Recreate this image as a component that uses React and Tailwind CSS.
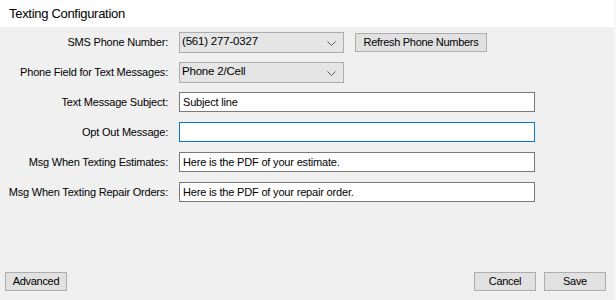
import React from "react";

function Chevron() {
  return (
    <svg width="9" height="5" viewBox="0 0 9 5" className="absolute right-[7px] top-[8px]">
      <path d="M0.5 0.5 L4.5 4.5 L8.5 0.5" fill="none" stroke="#555" strokeWidth="1" />
    </svg>
  );
}

function Combo({ value, width }) {
  return (
    <div className={`relative h-[21px] ${width} bg-[#e5e5e5] border border-[#adadad] pl-[2px] flex items-center text-[11.5px] tracking-[-0.2px]`}>
      <span>{value}</span>
      <Chevron />
    </div>
  );
}

function TextBox({ value, focused }) {
  return (
    <div
      className={`h-[20px] w-[356px] bg-white border ${focused ? "border-[#0078d7]" : "border-[#7a7a7a]"} pl-[3px] flex items-center whitespace-nowrap text-[11px] tracking-[-0.18px]`}
    >
      {value}
    </div>
  );
}

function Label({ children }) {
  return (
    <div className="w-[169px] pr-[1px] text-right whitespace-nowrap text-[11px] tracking-[-0.2px]">
      {children}
    </div>
  );
}

function Btn({ children, className }) {
  return (
    <button
      className={`h-[19px] bg-[#e1e1e1] border border-[#adadad] flex items-center justify-center whitespace-nowrap text-[11px] tracking-[-0.3px] ${className}`}
    >
      {children}
    </button>
  );
}

export default function App() {
  return (
    <div
      className="w-[616px] h-[300px] bg-[#f0f0f0] text-[12px] text-black flex flex-col border-r-2 border-[#f8f8f8]"
      style={{ fontFamily: '"Liberation Sans", Arial, sans-serif' }}
    >
      <div className="h-[27px] bg-white flex items-center pl-[9px] text-[13px] tracking-[-0.3px] shrink-0">
        Texting Configuration
      </div>
      <div className="flex flex-col pt-[5px] gap-[10px]">
        <div className="flex items-center gap-[10px] h-[20px]">
          <Label>SMS Phone Number:</Label>
          <Combo value="(561) 277-0327" width="w-[165px]" />
          <Btn className="w-[132px] ml-[1px]">Refresh Phone Numbers</Btn>
        </div>
        <div className="flex items-center gap-[10px] h-[20px]">
          <Label>Phone Field for Text Messages:</Label>
          <Combo value="Phone 2/Cell" width="w-[165px]" />
        </div>
        <div className="flex items-center gap-[10px] h-[20px]">
          <Label>Text Message Subject:</Label>
          <TextBox value="Subject line" />
        </div>
        <div className="flex items-center gap-[10px] h-[20px]">
          <Label>Opt Out Message:</Label>
          <TextBox value="" focused />
        </div>
        <div className="flex items-center gap-[10px] h-[20px]">
          <Label>Msg When Texting Estimates:</Label>
          <TextBox value="Here is the PDF of your estimate." />
        </div>
        <div className="flex items-center gap-[10px] h-[20px]">
          <Label>Msg When Texting Repair Orders:</Label>
          <TextBox value="Here is the PDF of your repair order." />
        </div>
      </div>
      <div className="flex-1" />
      <div className="flex items-center h-[19px] mb-[9px] pl-[5px] pr-[8px]">
        <Btn className="w-[62px]">Advanced</Btn>
        <div className="flex-1" />
        <Btn className="w-[62px]">Cancel</Btn>
        <Btn className="w-[62px] ml-[8px]">Save</Btn>
      </div>
    </div>
  );
}
